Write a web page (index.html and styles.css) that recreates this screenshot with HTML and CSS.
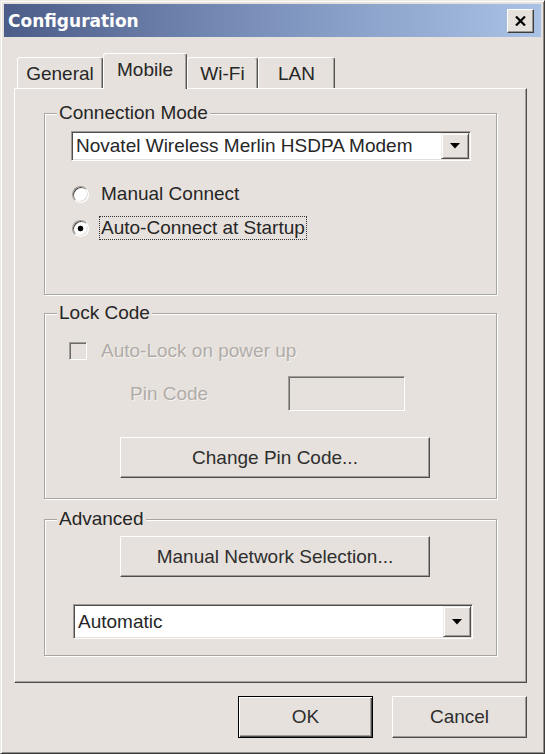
FILE: index.html
```html
<!DOCTYPE html>
<html lang="en">
<head>
    <meta charset="UTF-8">
    <title>Configuration</title>
    <link rel="stylesheet" href="styles.css">
</head>
<body>
    <div class="window">
        <div class="titlebar">
            <span class="title">Configuration</span>
            <button class="close-btn">
                <svg width="11" height="10" viewBox="0 0 11 10"><path d="M1 0.5 L10 9.5 M10 0.5 L1 9.5" stroke="#000" stroke-width="2.2" fill="none"/></svg>
            </button>
        </div>
        <div class="client">
            <div class="tabs">
                <div class="tab tab-general">General</div>
                <div class="tab tab-mobile active">Mobile</div>
                <div class="tab tab-wifi">Wi-Fi</div>
                <div class="tab tab-lan">LAN</div>
            </div>
            <div class="panel">
                <fieldset class="group group-mode">
                    <legend>Connection Mode</legend>
                    <div class="combo combo-modem">
                        <span class="combo-text">Novatel Wireless Merlin HSDPA Modem</span>
                        <span class="combo-btn"><svg width="10" height="6" viewBox="0 0 10 6"><path d="M0 0 H10 L5 5.5 Z" fill="#000"/></svg></span>
                    </div>
                    <div class="radio radio-first">
                        <span class="radio-dot"></span>
                        <span class="radio-label">Manual Connect</span>
                    </div>
                    <div class="radio checked">
                        <span class="radio-dot"></span>
                        <span class="radio-label focus">Auto-Connect at Startup</span>
                    </div>
                </fieldset>

                <fieldset class="group group-lock">
                    <legend>Lock Code</legend>
                    <div class="check-row">
                        <span class="check-box"></span>
                        <span class="disabled-text">Auto-Lock on power up</span>
                    </div>
                    <div class="pin-row">
                        <span class="pin-label disabled-text">Pin Code</span>
                        <span class="pin-input"></span>
                    </div>
                    <button class="btn btn-wide btn-pin">Change Pin Code...</button>
                </fieldset>

                <fieldset class="group group-advanced">
                    <legend>Advanced</legend>
                    <button class="btn btn-wide btn-network">Manual Network Selection...</button>
                    <div class="combo combo-auto">
                        <span class="combo-text">Automatic</span>
                        <span class="combo-btn"><svg width="10" height="6" viewBox="0 0 10 6"><path d="M0 0 H10 L5 5.5 Z" fill="#000"/></svg></span>
                    </div>
                </fieldset>
            </div>
            <div class="buttons">
                <button class="btn btn-dialog default">OK</button>
                <button class="btn btn-dialog">Cancel</button>
            </div>
        </div>
    </div>
</body>
</html>
```

FILE: styles.css
```css
* {
    box-sizing: border-box;
}
body {
    margin: 0;
    background-color: #e6e1dc;
    font-family: "Liberation Sans", Arial, sans-serif;
    font-size: 19px;
    color: #262626;
}
.window {
    width: 545px;
    height: 754px;
    display: flex;
    flex-direction: column;
    padding: 3px;
    background-color: #e6e1dc;
    border: 1px solid;
    border-color: #eeeae6 #3f3d3b #3f3d3b #eeeae6;
    box-shadow: inset 1px 1px #fff, inset -1px -1px #8f8b87;
}
.titlebar {
    flex: none;
    height: 33px;
    display: flex;
    align-items: center;
    justify-content: space-between;
    padding: 0 7px 0 4px;
    background: linear-gradient(to right, #4b5d88, #7d93bd 50%, #aac2e5);
}
.title {
    color: #fff;
    font-family: "DejaVu Sans", sans-serif;
    font-weight: bold;
    font-size: 17px;
}
.close-btn {
    width: 27px;
    height: 24px;
    padding: 0;
    display: flex;
    align-items: center;
    justify-content: center;
    background-color: #e6e1dc;
    border: 1px solid;
    border-color: #fff #3f3d3b #3f3d3b #fff;
    box-shadow: inset -1px -1px #9a9692;
}
.client {
    flex: 1;
    display: flex;
    flex-direction: column;
    padding: 16px 14px 0 10px;
}

/* tabs */
.tabs {
    display: flex;
    align-items: flex-end;
    height: 36px;
    padding-left: 3px;
}
.tab {
    position: relative;
    height: 31px;
    margin-bottom: 1px;
    display: flex;
    align-items: center;
    justify-content: center;
    padding-top: 1px;
    background-color: #e6e1dc;
    border-top: 1px solid #fff;
    border-left: 1px solid #fff;
    border-right: 1px solid #55524f;
    border-radius: 3px 3px 0 0;
    box-shadow: inset -1px 0 #a7a39f;
}
.tab-general { width: 86px; }
.tab-mobile { width: 84px; }
.tab-wifi { width: 71px; }
.tab-lan { width: 77px; }
.tab.active {
    height: 36px;
    margin-bottom: 0;
    padding-top: 0;
    padding-bottom: 4px;
    z-index: 1;
}
.panel {
    height: 595px;
    margin-top: -1px;
    padding: 13px 0 0 29px;
    border: 1px solid;
    border-color: #fff #4f4d4b #4f4d4b #fff;
    box-shadow: inset -1px -1px #a7a39f;
}

/* group boxes */
.group {
    width: 453px;
    margin: 0;
    padding: 0;
    border: 1px solid #a9a5a1;
    box-shadow: inset 1px 1px #fff, 1px 1px #fff;
}
.group legend {
    margin-left: 12px;
    padding: 0 2px;
    line-height: 22px;
    background-color: #e6e1dc;
}
.group-mode { height: 193px; }
.group-lock { height: 197px; margin-top: 7px; }
.group-advanced { height: 148px; margin-top: 9px; }

/* combo boxes */
.combo {
    width: 400px;
    height: 30px;
    display: flex;
    align-items: stretch;
    padding: 1px 0 1px 3px;
    background-color: #fff;
    border: 1px solid;
    border-color: #a09c98 #fff #fff #a09c98;
    box-shadow: inset 1px 1px #4f4d4b, inset -1px -1px #e2ded9;
}
.combo-modem {
    margin: 7px 0 0 26px;
}
.combo-auto {
    width: 400px;
    height: 35px;
    margin: 27px 0 0 28px;
}
.combo-text {
    flex: 1;
    display: flex;
    align-items: center;
    margin-left: 1px;
}
.combo-btn {
    width: 28px;
    margin-right: 1px;
    display: flex;
    align-items: center;
    justify-content: center;
    background-color: #e6e1dc;
    border: 1px solid;
    border-color: #eeeae6 #4f4d4b #4f4d4b #eeeae6;
    box-shadow: inset 1px 1px #fff, inset -1px -1px #a09c98;
}

/* radios */
.radio {
    height: 34px;
    display: flex;
    align-items: center;
    margin-left: 27px;
}
.radio-first {
    margin-top: 16px;
}
.radio-dot {
    width: 17px;
    height: 17px;
    margin-right: 12px;
    border-radius: 50%;
    background-color: #fff;
    border: 1px solid;
    border-color: #a09c98 #fff #fff #a09c98;
    box-shadow: inset 1px 1px #4f4d4b, inset -1px -1px #e2ded9;
}
.radio.checked .radio-dot {
    background: radial-gradient(circle, #000 2.5px, #fff 3.2px);
}
.radio-label.focus {
    margin-left: -2px;
    padding: 0 1px;
    line-height: 22px;
    border: 1px dotted #333;
}

/* lock code */
.check-row {
    height: 26px;
    display: flex;
    align-items: center;
    margin: 14px 0 0 24px;
}
.check-box {
    width: 18px;
    height: 18px;
    margin-right: 14px;
    border: 1px solid;
    border-color: #a09c98 #fff #fff #a09c98;
    box-shadow: inset 1px 1px #6e6b68, inset -1px -1px #e2ded9;
}
.disabled-text {
    color: #b0aca8;
    text-shadow: 1px 1px rgba(255, 255, 255, 0.6);
}
.pin-row {
    height: 35px;
    display: flex;
    align-items: center;
    margin: 12px 0 0 85px;
}
.pin-label {
    width: 158px;
}
.pin-input {
    width: 117px;
    height: 35px;
    border: 1px solid;
    border-color: #a09c98 #fff #fff #a09c98;
    box-shadow: inset 1px 1px #6e6b68, inset -1px -1px #e2ded9;
}

/* buttons */
.btn {
    display: block;
    padding: 0;
    font-family: inherit;
    font-size: 19px;
    color: #2e2e2e;
    background-color: #e6e1dc;
    border: 1px solid;
    border-color: #fff #4f4d4b #4f4d4b #fff;
    box-shadow: inset -1px -1px #a09c98;
}
.btn-wide {
    width: 310px;
    height: 41px;
    margin-left: 75px;
}
.btn-pin {
    margin-top: 26px;
}
.btn-network {
    margin-top: 6px;
}
.buttons {
    display: flex;
    justify-content: flex-end;
    gap: 19px;
    margin-top: 13px;
}
.btn-dialog {
    width: 135px;
    height: 42px;
}
.btn-dialog.default {
    border: 1px solid #000;
    box-shadow: inset 1px 1px #fff, inset -1px -1px #4f4d4b, inset -2px -2px #a09c98;
}
```
